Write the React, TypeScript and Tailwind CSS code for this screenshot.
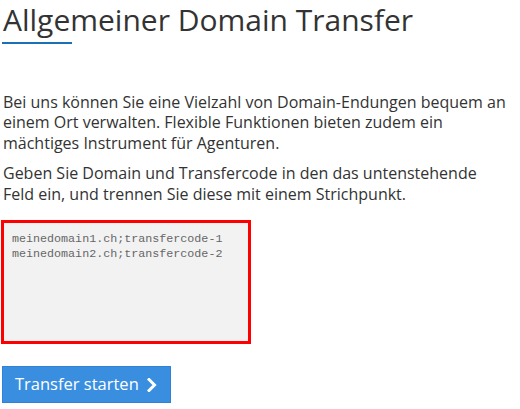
export default function App() {
    return (
        <div className="w-[520px] h-[409px] bg-white text-[#333] font-['Open_Sans',sans-serif] overflow-hidden">
            <div className="pl-[3px]">
                <h1 className="text-[30px] leading-[40px] font-normal text-[#333]">
                    Allgemeiner Domain Transfer
                </h1>
                <div className="w-[70px] h-[2px] bg-[#1a6fb5] mt-[2px] -ml-[1px]" />
            </div>

            <div className="pl-[3px] w-[510px] pt-[48px] text-[16px] leading-[20.4px]">
                <p className="mb-[10px]">
                    Bei uns können Sie eine Vielzahl von Domain-Endungen bequem an einem Ort verwalten. Flexible Funktionen bieten zudem ein mächtiges Instrument für Agenturen.
                </p>
                <p className="mb-[16px]">
                    Geben Sie Domain und Transfercode in den das untenstehende Feld ein, und trennen Sie diese mit einem Strichpunkt.
                </p>

                <textarea
                    className="block -ml-[2px] w-[250px] h-[124px] border-[3px] border-[#ff0000] bg-[#f2f2f2] px-[8px] pt-[9px] resize-none font-['Liberation_Mono',monospace] text-[11.7px] leading-[14.5px] text-[#666] outline-none"
                    defaultValue={"meinedomain1.ch;transfercode-1\nmeinedomain2.ch;transfercode-2"}
                />

                <button className="mt-[22px] -ml-[1px] flex items-center gap-[8px] h-[37px] px-[12px] bg-[#3a8ee0] border border-[#2f83d6] text-white text-[16.5px]">
                    Transfer starten
                    <svg width="11" height="14" viewBox="0 0 11 14">
                        <path d="M2 1.5 L7.5 7 L2 12.5" fill="none" stroke="white" strokeWidth="3" strokeLinecap="square" />
                    </svg>
                </button>
            </div>
        </div>
    );
}
